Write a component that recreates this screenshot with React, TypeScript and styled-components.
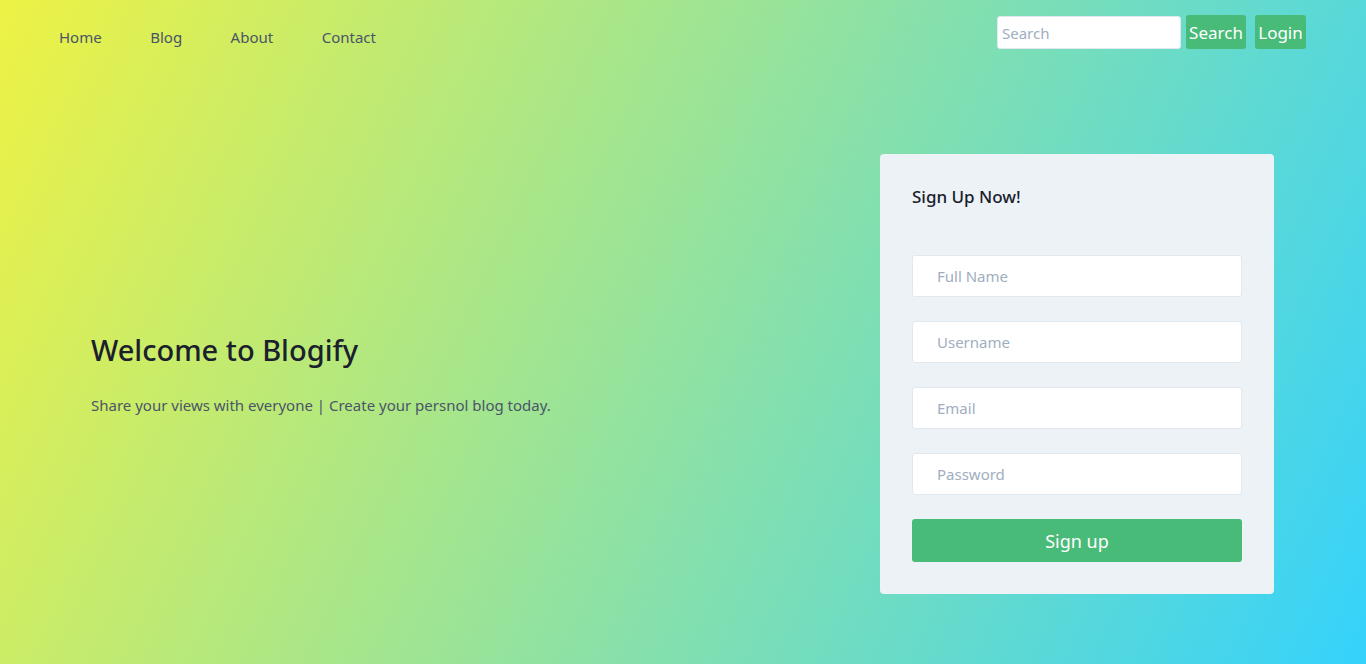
import React from "react";
import styled, { createGlobalStyle } from "styled-components";

const GlobalStyle = createGlobalStyle`
  html, body { margin: 0; padding: 0; }
  body { font-family: "Noto Sans", "Open Sans", sans-serif; }
  * { box-sizing: border-box; }
`;

const Page = styled.div`
  width: 100%;
  height: 664px;
  background: linear-gradient(115deg, #eef244, #35d2fc);
  display: flex;
  flex-direction: column;
  overflow: hidden;
`;

const NavBar = styled.nav`
  display: flex;
  justify-content: space-between;
  align-items: center;
  padding: 15px 60px 0 59px;
  height: 49px;
`;

const NavLinks = styled.ul`
  display: flex;
  list-style: none;
  margin: 10px 0 0;
  padding: 0;
  gap: 48.5px;
`;

const NavLink = styled.a`
  color: #4a5568;
  font-size: 15px;
  text-decoration: none;
`;

const NavRight = styled.div`
  display: flex;
  align-items: center;
  gap: 9px;
`;

const SearchGroup = styled.div`
  display: flex;
  align-items: center;
  gap: 5px;
`;

const SearchInput = styled.input`
  width: 184px;
  height: 33px;
  margin-top: 1px;
  border: 1px solid #e2e8f0;
  border-radius: 3px;
  background: #fff;
  padding: 0 4px;
  font-family: inherit;
  font-size: 15px;
  color: #4a5568;
  &::placeholder { color: #a0aec0; }
`;

const SmallButton = styled.button<{ $w: number }>`
  width: ${(p) => p.$w}px;
  height: 34px;
  padding: 0;
  border: none;
  border-radius: 3px;
  background: #48bb78;
  color: #fff;
  font-family: inherit;
  font-size: 17px;
  cursor: pointer;
`;

const Main = styled.main`
  flex: 1;
  display: flex;
  justify-content: space-between;
  align-items: flex-start;
  padding: 105px 92px 0 91px;
`;

const Hero = styled.section`
  margin-top: 179px;
`;

const HeroTitle = styled.h1`
  margin: 0;
  font-size: 29px;
  font-weight: 500;
  color: #1a202c;
  line-height: 1.2;
`;

const HeroText = styled.p`
  margin: 27px 0 0;
  font-size: 15px;
  color: #4a5568;
`;

const Card = styled.form`
  width: 394px;
  background: #edf2f7;
  border-radius: 4px;
  padding: 31px 32px 32px;
  display: flex;
  flex-direction: column;
`;

const CardTitle = styled.h2`
  margin: 0 0 46px;
  font-size: 17px;
  font-weight: 500;
  color: #1a202c;
  line-height: 24px;
`;

const Field = styled.input`
  width: 100%;
  height: 42px;
  border: 1px solid #e2e8f0;
  border-radius: 3px;
  background: #fff;
  padding: 0 24px;
  font-family: inherit;
  font-size: 15px;
  color: #4a5568;
  margin-bottom: 24px;
  &::placeholder { color: #a0aec0; }
`;

const SubmitButton = styled.button`
  width: 100%;
  height: 43px;
  border: none;
  border-radius: 3px;
  background: #48bb78;
  color: #fff;
  font-family: inherit;
  font-size: 18px;
  cursor: pointer;
`;

export default function App() {
  return (
    <>
      <GlobalStyle />
      <Page>
        <NavBar>
          <NavLinks>
            {["Home", "Blog", "About", "Contact"].map((l) => (
              <li key={l}>
                <NavLink href="#">{l}</NavLink>
              </li>
            ))}
          </NavLinks>
          <NavRight>
            <SearchGroup>
              <SearchInput placeholder="Search" />
              <SmallButton $w={60}>Search</SmallButton>
            </SearchGroup>
            <SmallButton $w={51}>Login</SmallButton>
          </NavRight>
        </NavBar>
        <Main>
          <Hero>
            <HeroTitle>Welcome to Blogify</HeroTitle>
            <HeroText>Share your views with everyone | Create your persnol blog today.</HeroText>
          </Hero>
          <Card onSubmit={(e) => e.preventDefault()}>
            <CardTitle>Sign Up Now!</CardTitle>
            <Field placeholder="Full Name" />
            <Field placeholder="Username" />
            <Field placeholder="Email" />
            <Field placeholder="Password" />
            <SubmitButton type="submit">Sign up</SubmitButton>
          </Card>
        </Main>
      </Page>
    </>
  );
}
